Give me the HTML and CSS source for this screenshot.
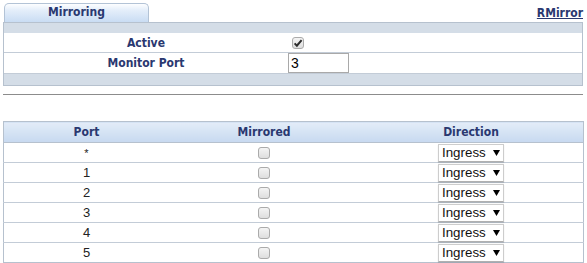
FILE: index.html
```html
<!DOCTYPE html>
<html lang="en">
<head>
<meta charset="utf-8">
<title>Mirroring</title>
<link rel="stylesheet" href="styles.css">
</head>
<body>
<div class="page">
  <div class="tabbar">
    <div class="tab">Mirroring</div>
    <a class="rlink" href="#">RMirror</a>
  </div>
  <div class="panel">
    <div class="strip"></div>
    <div class="frow">
      <div class="flabel">Active</div>
      <div class="fval">
        <span class="chk on"><svg viewBox="0 0 12 12" width="12" height="12"><path d="M2.6 6.4 L4.9 8.7 L9.6 3.2" fill="none" stroke="#2d2d2d" stroke-width="2"/></svg></span>
      </div>
    </div>
    <div class="frow second">
      <div class="flabel">Monitor Port</div>
      <div class="fval"><input class="port" type="text" value="3"></div>
    </div>
    <div class="strip bottom"></div>
  </div>
  <div class="sep"></div>
  <table class="ports">
    <thead>
      <tr><th class="c-port">Port</th><th class="c-mir">Mirrored</th><th class="c-dir">Direction</th></tr>
    </thead>
    <tbody>
      <tr><td class="star">*</td><td><span class="chk"></span></td><td><select class="dir"><option>Ingress</option></select></td></tr>
      <tr><td>1</td><td><span class="chk"></span></td><td><select class="dir"><option>Ingress</option></select></td></tr>
      <tr><td>2</td><td><span class="chk"></span></td><td><select class="dir"><option>Ingress</option></select></td></tr>
      <tr><td>3</td><td><span class="chk"></span></td><td><select class="dir"><option>Ingress</option></select></td></tr>
      <tr><td>4</td><td><span class="chk"></span></td><td><select class="dir"><option>Ingress</option></select></td></tr>
      <tr><td>5</td><td><span class="chk"></span></td><td><select class="dir"><option>Ingress</option></select></td></tr>
    </tbody>
  </table>
</div>
</body>
</html>
```
FILE: styles.css
```css
html, body {
  margin: 0;
  padding: 0;
  background: #ffffff;
}

.page {
  width: 580px;
  padding: 3px 0 0 3px;
  font-family: "Liberation Sans", Arial, sans-serif;
}

.tabbar {
  display: flex;
  justify-content: space-between;
  align-items: flex-end;
  height: 19px;
}

.tab {
  box-sizing: border-box;
  width: 145px;
  height: 19px;
  margin-left: 1px;
  border: 1px solid #b3c3d6;
  border-bottom: none;
  border-radius: 5px 5px 0 0;
  background: linear-gradient(#fdfeff 0%, #e4eefa 35%, #c9dcf3 100%);
  text-align: center;
  font-family: "DejaVu Sans Condensed", "DejaVu Sans", sans-serif;
  font-weight: bold;
  font-size: 12px;
  line-height: 16px;
  color: #2a3870;
}

.rlink {
  align-self: flex-start;
  margin-top: 3px;
  font-family: "DejaVu Sans Condensed", "DejaVu Sans", sans-serif;
  font-weight: bold;
  font-size: 12px;
  line-height: 14px;
  color: #2a3870;
  text-decoration: underline;
}

.panel {
  border: 1px solid #b6c1ce;
}

.strip {
  height: 10px;
  background: #d4dde7;
}

.strip.bottom {
  height: 11px;
  border-top: 1px solid #c3ccd7;
}

.frow {
  display: grid;
  grid-template-columns: 284px 1fr;
  height: 19px;
  align-items: center;
}

.frow.second {
  height: 20px;
  border-top: 1px solid #c3ccd7;
}

.flabel {
  text-align: center;
  font-family: "DejaVu Sans Condensed", "DejaVu Sans", sans-serif;
  font-weight: bold;
  font-size: 12px;
  color: #2a3870;
}

.fval {
  display: flex;
  align-items: center;
  height: 100%;
}

.frow .chk {
  margin-left: 4px;
}

.chk {
  box-sizing: border-box;
  display: inline-block;
  width: 12px;
  height: 12px;
  border: 1px solid #ababab;
  border-radius: 3px;
  background: linear-gradient(#f4f4f4, #dedede);
  vertical-align: middle;
}

.chk svg {
  display: block;
  margin: -1px 0 0 -1px;
}

.port {
  box-sizing: border-box;
  width: 61px;
  height: 20px;
  margin: 0;
  padding: 0 2px;
  border: 1px solid #a9a9a9;
  font-family: "Liberation Sans", Arial, sans-serif;
  font-size: 14px;
  color: #000;
  background: #fff;
}

.sep {
  height: 1px;
  margin-top: 8px;
  background: #8c8c8c;
}

.ports {
  width: 580px;
  margin-top: 26px;
  border-collapse: collapse;
  border: 1px solid #b6c1ce;
  table-layout: fixed;
}

.ports th {
  height: 20px;
  padding: 0;
  background: linear-gradient(#e3ecf8 0%, #d6e4f4 45%, #c7d9f0 100%);
  border-bottom: 1px solid #b6c1ce;
  font-family: "DejaVu Sans Condensed", "DejaVu Sans", sans-serif;
  font-weight: bold;
  font-size: 12px;
  color: #2a3870;
  text-align: center;
}

.c-port { width: 165px; }
.c-mir { width: 190px; }
.c-dir { width: 224px; }

.ports td {
  height: 19px;
  padding: 0;
  border-top: 1px solid #c3ccd7;
  text-align: center;
  vertical-align: middle;
  font-size: 13px;
  color: #222;
  line-height: 14px;
}

.ports td.star {
  vertical-align: top;
  font-size: 11px;
  padding-top: 3px;
  height: 16px;
}

.dir {
  -webkit-appearance: none;
  appearance: none;
  box-sizing: border-box;
  width: 66px;
  height: 18px;
  margin: 0;
  padding: 0 0 0 3px;
  border: 1px solid #cdcdcd;
  border-bottom-color: #b0b0b0;
  border-radius: 0;
  box-shadow: 0 1px 1px rgba(0, 0, 0, 0.12);
  background: #fff url("data:image/svg+xml,%3Csvg xmlns='http://www.w3.org/2000/svg' width='7' height='6'%3E%3Cpath d='M0 0H7L3.5 6Z' fill='%23000'/%3E%3C/svg%3E") no-repeat 54px 5px;
  font-family: "Liberation Sans", Arial, sans-serif;
  font-size: 13.33px;
  color: #111;
  vertical-align: middle;
}
```
